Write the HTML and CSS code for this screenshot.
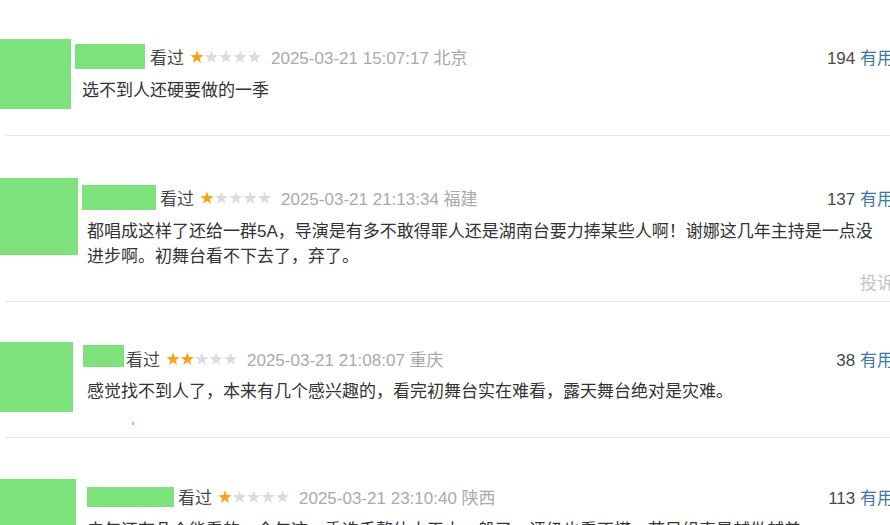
FILE: index.html
```html
<!DOCTYPE html>
<html lang="zh-CN">
<head>
<meta charset="utf-8">
<title>短评</title>
<link rel="stylesheet" href="styles.css">
</head>
<body>
<svg class="defs" width="0" height="0" aria-hidden="true">
  <defs>
    <polygon id="star" points="7,0.3 8.65,5.03 13.66,5.14 9.66,8.17 11.12,12.96 7,10.1 2.88,12.96 4.34,8.17 0.34,5.14 5.35,5.03"/>
  </defs>
</svg>

<section class="review r1">
  <div class="avatar"></div>
  <div class="main">
    <div class="head">
      <span class="name"></span>
      <span class="status">看过</span>
      <svg class="stars" viewBox="0 0 72 14" width="72" height="14">
        <use href="#star" x="0" class="on"/><use href="#star" x="14.4" class="off"/><use href="#star" x="28.8" class="off"/><use href="#star" x="43.2" class="off"/><use href="#star" x="57.6" class="off"/>
      </svg>
      <span class="time">2025-03-21 15:07:17 北京</span>
      <span class="votes"><span class="count">194</span> <a class="useful">有用</a></span>
    </div>
    <p class="content">选不到人还硬要做的一季</p>
  </div>
</section>
<div class="sep"></div>

<section class="review r2">
  <div class="avatar"></div>
  <div class="main">
    <div class="head">
      <span class="name"></span>
      <span class="status">看过</span>
      <svg class="stars" viewBox="0 0 72 14" width="72" height="14">
        <use href="#star" x="0" class="on"/><use href="#star" x="14.4" class="off"/><use href="#star" x="28.8" class="off"/><use href="#star" x="43.2" class="off"/><use href="#star" x="57.6" class="off"/>
      </svg>
      <span class="time">2025-03-21 21:13:34 福建</span>
      <span class="votes"><span class="count">137</span> <a class="useful">有用</a></span>
    </div>
    <p class="content">都唱成这样了还给一群5A，导演是有多不敢得罪人还是湖南台要力捧某些人啊！谢娜这几年主持是一点没进步啊。初舞台看不下去了，弃了。</p>
    <div class="report">投诉</div>
  </div>
</section>
<div class="sep"></div>

<section class="review r3">
  <div class="avatar"></div>
  <div class="main">
    <div class="head">
      <span class="name"></span>
      <span class="status">看过</span>
      <svg class="stars" viewBox="0 0 72 14" width="72" height="14">
        <use href="#star" x="0" class="on"/><use href="#star" x="14.4" class="on"/><use href="#star" x="28.8" class="off"/><use href="#star" x="43.2" class="off"/><use href="#star" x="57.6" class="off"/>
      </svg>
      <span class="time">2025-03-21 21:08:07 重庆</span>
      <span class="votes"><span class="count">38</span> <a class="useful">有用</a></span>
    </div>
    <p class="content">感觉找不到人了，本来有几个感兴趣的，看完初舞台实在难看，露天舞台绝对是灾难。</p>
    <div class="dot"></div>
  </div>
</section>
<div class="sep"></div>

<section class="review r4">
  <div class="avatar"></div>
  <div class="main">
    <div class="head">
      <span class="name"></span>
      <span class="status">看过</span>
      <svg class="stars" viewBox="0 0 72 14" width="72" height="14">
        <use href="#star" x="0" class="on"/><use href="#star" x="14.4" class="off"/><use href="#star" x="28.8" class="off"/><use href="#star" x="43.2" class="off"/><use href="#star" x="57.6" class="off"/>
      </svg>
      <span class="time">2025-03-21 23:10:40 陕西</span>
      <span class="votes"><span class="count">113</span> <a class="useful">有用</a></span>
    </div>
    <p class="content">去年还有几个能看的，今年这一季选手整体水平太一般了，评级也看不懂，节目组真是越做越差。</p>
  </div>
</section>
</body>
</html>
```

FILE: styles.css
```css
html, body {
  margin: 0;
  padding: 0;
  background: #fff;
}

body {
  width: 890px;
  height: 525px;
  overflow: hidden;
  font-family: "Liberation Sans", "Noto Sans CJK SC", sans-serif;
  font-size: 17px;
  color: #333;
}

.defs {
  position: absolute;
  width: 0;
  height: 0;
}

.review {
  display: flex;
  width: 894px;
  padding-top: var(--top);
  padding-bottom: var(--pb);
}

.avatar {
  flex: none;
  width: var(--aw);
  height: var(--ah);
  background: #7ee27c;
}

.main {
  flex: 1;
  min-width: 0;
  padding-top: var(--ht);
  padding-left: var(--gap);
}

.head {
  display: flex;
  align-items: center;
  height: 25px;
  white-space: nowrap;
}

.name {
  flex: none;
  align-self: flex-start;
  width: var(--nw);
  height: var(--nh);
  margin-top: var(--nt);
  margin-right: var(--ng);
  background: #7ee27c;
}

.status {
  color: #444;
  margin-right: 6px;
}

.stars {
  flex: none;
  margin-right: 9px;
}

.stars .on {
  fill: #f7a21d;
}

.stars .off {
  fill: #dcdcdc;
}

.time {
  color: #aaa;
}

.votes {
  margin-left: auto;
  color: #494949;
}

.useful {
  color: #3c78a8;
}

.content {
  margin: var(--cm) 0 0 var(--cx);
  padding-right: 12px;
  line-height: 25px;
}

.report {
  margin-top: 2px;
  line-height: 25px;
  text-align: right;
  color: #c4c4c4;
}

.dot {
  width: 2px;
  height: 3px;
  margin: 18px 0 0 49px;
  background: #7ee27c;
}

.sep {
  height: 1px;
  margin-left: 5px;
  background: #e8e8e8;
}

.r1 {
  --top: 39px; --pb: 26px;
  --aw: 71px; --ah: 70px; --gap: 4px; --ht: 5px;
  --nw: 70px; --nh: 25px; --nt: 0px; --ng: 5px;
  --cm: 9px; --cx: 7px;
}

.r2 {
  --top: 42px; --pb: 5px;
  --aw: 78px; --ah: 77px; --gap: 4px; --ht: 7px;
  --nw: 74px; --nh: 25px; --nt: 0px; --ng: 4px;
  --cm: 9px; --cx: 5px;
}

.r3 {
  --top: 40px; --pb: 12px;
  --aw: 73px; --ah: 70px; --gap: 10px; --ht: 4px;
  --nw: 41px; --nh: 22px; --nt: -1px; --ng: 2px;
  --cm: 8px; --cx: 4px;
}

.r4 {
  --top: 41px; --pb: 0px;
  --aw: 76px; --ah: 70px; --gap: 11px; --ht: 5px;
  --nw: 87px; --nh: 20px; --nt: 3px; --ng: 4px;
  --cm: 9px; --cx: 0px;
}
```
